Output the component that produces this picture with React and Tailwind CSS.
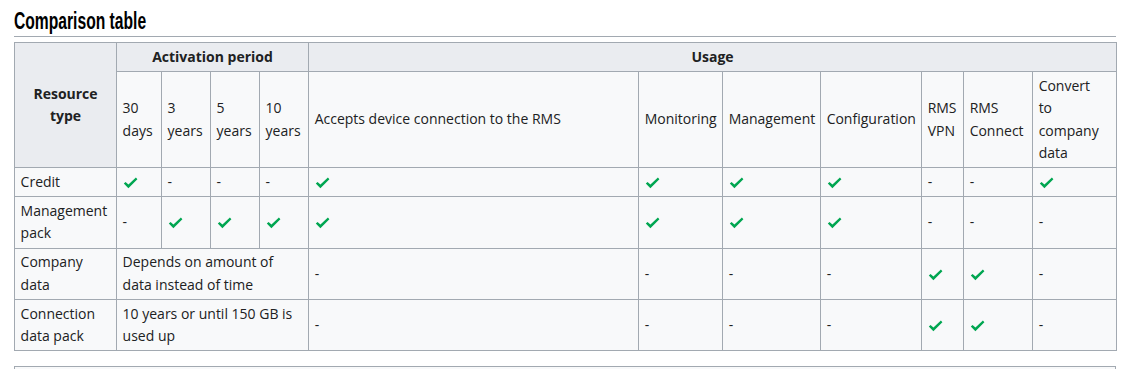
import React from "react";

const Check = () => (
  <svg width="15" height="12" viewBox="0 0 15 12" className="inline-block align-middle">
    <path d="M0.8 6.6 L2.6 4.9 L5.4 7.6 L12.9 0.6 L14.4 2.2 L5.4 11.2 Z" fill="#00a651" />
  </svg>
);

const td = "border border-[#a2a9b1] bg-[#f8f9fa] px-[5.6px] py-[2.8px] align-middle text-left font-normal";
const th = "border border-[#a2a9b1] bg-[#eaecf0] px-[5.6px] py-[2.8px] align-middle text-center font-bold";

const C = () => <Check />;
const D = () => <span>-</span>;

const rows = [
  { name: "Credit", cells: ["c", "d", "d", "d", "c", "c", "c", "c", "d", "d", "c"] },
  { name: "Management pack", cells: ["d", "c", "c", "c", "c", "c", "c", "c", "d", "d", "d"] },
];

export default function App() {
  return (
    <div className="bg-white w-[1127px] h-[369px] overflow-hidden text-[#202122]" style={{ fontFamily: '"Open Sans", sans-serif' }}>
      <div className="pl-[14px] pr-[11px] pt-[6px]">
        <h2 className="h-[31px] border-b border-[#a2a9b1] text-black overflow-visible whitespace-nowrap">
          <span
            className="inline-block origin-left scale-x-[0.68] text-[23px] leading-[31px] font-bold"
            style={{ fontFamily: '"Liberation Sans", Arial, sans-serif' }}
          >
            Comparison table
          </span>
        </h2>
        <table className="mt-[5px] w-[1102px] table-fixed border-collapse text-[14px] leading-[1.6]">
          <colgroup>
            <col className="w-[102px]" />
            <col className="w-[45px]" />
            <col className="w-[49px]" />
            <col className="w-[49px]" />
            <col className="w-[49px]" />
            <col className="w-[330px]" />
            <col className="w-[84px]" />
            <col className="w-[98px]" />
            <col className="w-[101px]" />
            <col className="w-[42px]" />
            <col className="w-[69px]" />
            <col className="w-[84px]" />
          </colgroup>
          <thead>
            <tr className="h-[29px]">
              <th rowSpan={2} className={th}>Resource type</th>
              <th colSpan={4} className={th}>Activation period</th>
              <th colSpan={7} className={th}>Usage</th>
            </tr>
            <tr>
              <th className={td}>30 days</th>
              <th className={td}>3 years</th>
              <th className={td}>5 years</th>
              <th className={td}>10 years</th>
              <th className={td}>Accepts device connection to the RMS</th>
              <th className={td}>Monitoring</th>
              <th className={td}>Management</th>
              <th className={td}>Configuration</th>
              <th className={td}>RMS VPN</th>
              <th className={td}>RMS Connect</th>
              <th className={td}>Convert<br />to<br />company data</th>
            </tr>
          </thead>
          <tbody>
            {rows.map((r) => (
              <tr key={r.name}>
                <td className={td}>{r.name}</td>
                {r.cells.map((c, i) => (
                  <td key={i} className={td}>{c === "c" ? <C /> : <D />}</td>
                ))}
              </tr>
            ))}
            <tr>
              <td className={td}>Company data</td>
              <td colSpan={4} className={td}>Depends on amount of data instead of time</td>
              <td className={td}><D /></td>
              <td className={td}><D /></td>
              <td className={td}><D /></td>
              <td className={td}><D /></td>
              <td className={td}><C /></td>
              <td className={td}><C /></td>
              <td className={td}><D /></td>
            </tr>
            <tr>
              <td className={td}>Connection data pack</td>
              <td colSpan={4} className={td}>10 years or until 150 GB is used up</td>
              <td className={td}><D /></td>
              <td className={td}><D /></td>
              <td className={td}><D /></td>
              <td className={td}><D /></td>
              <td className={td}><C /></td>
              <td className={td}><C /></td>
              <td className={td}><D /></td>
            </tr>
          </tbody>
        </table>
        <div className="mt-[15px] h-[40px] border-t border-l border-r border-[#a2a9b1] bg-[#f8f9fa]" />
      </div>
    </div>
  );
}
